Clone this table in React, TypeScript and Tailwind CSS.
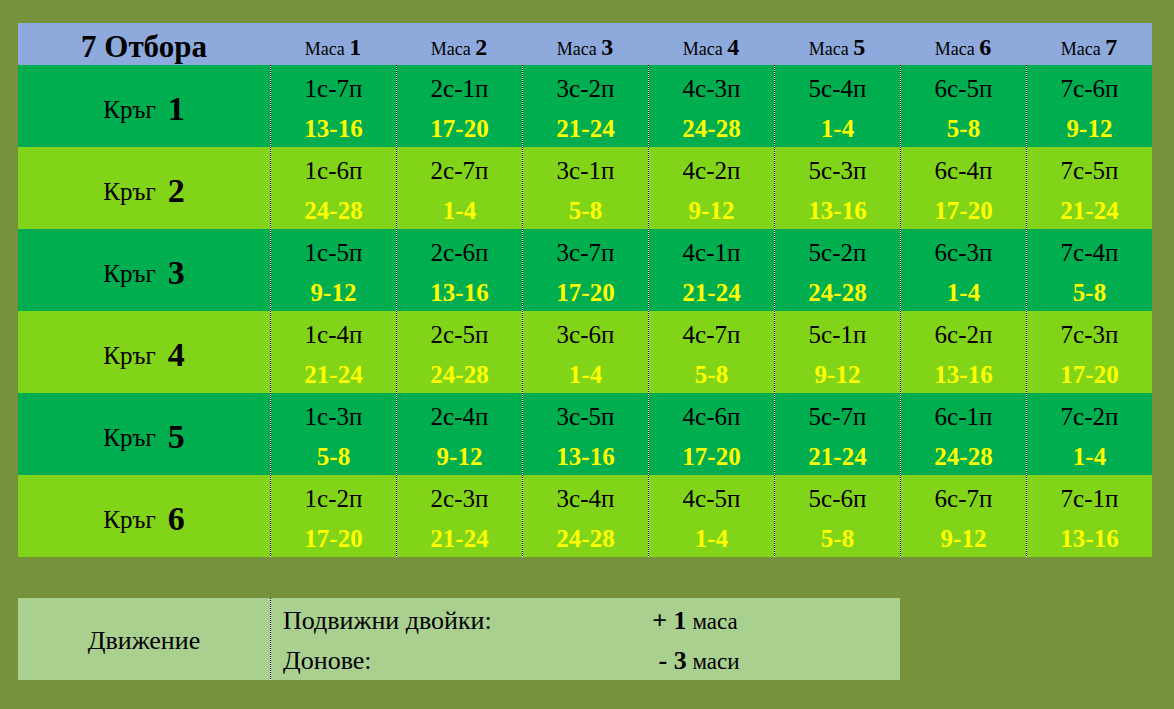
import React from "react";

const rounds: [string, string][][] = [
  [["1с-7п","13-16"],["2с-1п","17-20"],["3с-2п","21-24"],["4с-3п","24-28"],["5с-4п","1-4"],["6с-5п","5-8"],["7с-6п","9-12"]],
  [["1с-6п","24-28"],["2с-7п","1-4"],["3с-1п","5-8"],["4с-2п","9-12"],["5с-3п","13-16"],["6с-4п","17-20"],["7с-5п","21-24"]],
  [["1с-5п","9-12"],["2с-6п","13-16"],["3с-7п","17-20"],["4с-1п","21-24"],["5с-2п","24-28"],["6с-3п","1-4"],["7с-4п","5-8"]],
  [["1с-4п","21-24"],["2с-5п","24-28"],["3с-6п","1-4"],["4с-7п","5-8"],["5с-1п","9-12"],["6с-2п","13-16"],["7с-3п","17-20"]],
  [["1с-3п","5-8"],["2с-4п","9-12"],["3с-5п","13-16"],["4с-6п","17-20"],["5с-7п","21-24"],["6с-1п","24-28"],["7с-2п","1-4"]],
  [["1с-2п","17-20"],["2с-3п","21-24"],["3с-4п","24-28"],["4с-5п","1-4"],["5с-6п","5-8"],["6с-7п","9-12"],["7с-1п","13-16"]],
];

function Sep() {
  return (
    <div className="w-px self-stretch shrink-0 bg-[repeating-linear-gradient(to_bottom,#000_0px,#000_1px,#fff_1px,#fff_2px)]" />
  );
}

export default function App() {
  return (
    <div className="min-h-[709px] w-[1174px] bg-[#76923C] pt-[23px] pl-[18px] [font-family:'Liberation_Serif','Times_New_Roman',serif] text-black">
      <div className="w-[1134px] flex flex-col">
        {/* header */}
        <div className="flex h-[42px] bg-[#8EA9DB] items-center">
          <div className="w-[252px] shrink-0 text-center font-bold text-[31px] leading-none pt-[4px]">7 Отбора</div>
          {[1, 2, 3, 4, 5, 6, 7].map((n) => (
            <div key={n} className="w-[126px] shrink-0 text-center leading-none pt-[6px]">
              <span className="text-[18px]">Маса </span>
              <span className="text-[24px] font-bold">{n}</span>
            </div>
          ))}
        </div>
        {rounds.map((r, i) => (
          <div
            key={i}
            className={`flex h-[82px] ${i % 2 === 0 ? "bg-[#00AE4F]" : "bg-[#82D418]"}`}
          >
            <div className="w-[252px] shrink-0 flex items-center justify-center pt-[6px]">
              <span className="text-[25px] leading-none">Кръг</span>
              <span className="text-[34px] font-bold leading-none ml-[12px]">{i + 1}</span>
            </div>
            {r.map(([pair, boards], j) => (
              <React.Fragment key={j}>
                <Sep />
                <div className="w-[125px] shrink-0 flex flex-col items-center">
                  <div className="h-[41px] flex items-center text-[25px] leading-none pt-[5px]">{pair}</div>
                  <div className="h-[41px] flex items-center text-[25px] leading-none font-bold text-[#FFFF00] pt-[4px]">{boards}</div>
                </div>
              </React.Fragment>
            ))}
          </div>
        ))}
      </div>

      {/* movement table */}
      <div className="mt-[41px] w-[882px] h-[82px] flex bg-[#A9D08E]">
        <div className="w-[252px] shrink-0 flex items-center justify-center text-[26px] leading-none pt-[4px]">Движение</div>
        <Sep />
        <div className="flex-1 flex flex-col">
          <div className="h-[41px] flex items-center text-[26px] leading-none pt-[4px]">
            <div className="w-[219px] pl-[12px] shrink-0 whitespace-nowrap">Подвижни двойки:</div>
            <div className="flex-1 text-center whitespace-nowrap">
              <span className="font-bold text-[26px]">+ 1</span>
              <span className="text-[23px]"> маса</span>
            </div>
          </div>
          <div className="h-[41px] flex items-center text-[26px] leading-none pt-[2px]">
            <div className="w-[219px] pl-[12px] shrink-0 whitespace-nowrap">Донове:</div>
            <div className="flex-1 text-center pl-[8px] whitespace-nowrap">
              <span className="font-bold text-[26px]">- 3</span>
              <span className="text-[23px]"> маси</span>
            </div>
          </div>
        </div>
      </div>
    </div>
  );
}
